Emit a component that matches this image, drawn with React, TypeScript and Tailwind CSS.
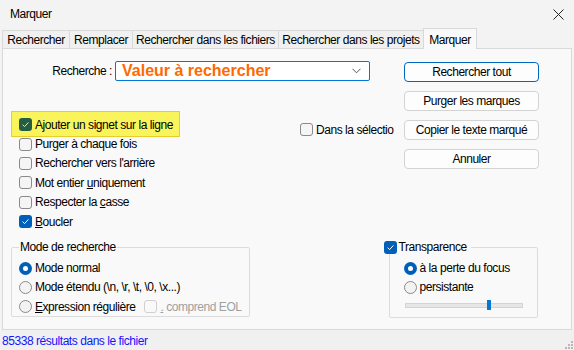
import React from "react";

const font = { fontFamily: '"Liberation Sans", Arial, sans-serif' };

function Check({ checked, tone = "blue", disabled }: { checked?: boolean; tone?: "blue" | "green"; disabled?: boolean }) {
  if (checked) {
    const bg = tone === "green" ? "bg-[#245d44]" : "bg-[#005fb8]";
    const stroke = tone === "green" ? "#d9ecb8" : "#ffffff";
    return (
      <span className={`flex w-[13px] h-[13px] shrink-0 items-center justify-center rounded-[3px] ${bg}`}>
        <svg width="9" height="9" viewBox="0 0 9 9">
          <path d="M1.6 4.7 L3.6 6.6 L7.4 2.4" fill="none" stroke={stroke} strokeWidth="1" />
        </svg>
      </span>
    );
  }
  return (
    <span
      className={
        disabled
          ? "block w-[13px] h-[13px] shrink-0 rounded-[3px] border border-[#d0d0d0] bg-[#f9f9f9]"
          : "block w-[13px] h-[13px] shrink-0 rounded-[3px] border border-[#8a8a8a] bg-[#f5f5f5]"
      }
    />
  );
}

function Radio({ checked }: { checked?: boolean }) {
  if (checked) {
    return (
      <span className="flex w-[13px] h-[13px] shrink-0 items-center justify-center rounded-full bg-[#005fb8]">
        <span className="block w-[5px] h-[5px] rounded-full bg-white" />
      </span>
    );
  }
  return <span className="block w-[13px] h-[13px] shrink-0 rounded-full border border-[#8a8a8a] bg-[#f3f3f3]" />;
}

function Row({ children, box }: { children: React.ReactNode; box: React.ReactNode }) {
  return (
    <div className="flex h-[19.4px] items-center gap-[3px] whitespace-nowrap">
      {box}
      <span>{children}</span>
    </div>
  );
}

function Btn({ label, focused }: { label: string; focused?: boolean }) {
  return (
    <div
      className={[
        "flex h-[20px] w-[135px] items-center justify-center rounded-[4px] bg-[#fdfdfd] whitespace-nowrap",
        focused ? "border border-[#0067c0]" : "border border-[#d3d3d3]",
      ].join(" ")}
    >
      {label}
    </div>
  );
}

const tabs = [
  { label: "Rechercher", w: "w-[67px]" },
  { label: "Remplacer", w: "w-[63px]" },
  { label: "Rechercher dans les fichiers", w: "w-[146px]" },
  { label: "Rechercher dans les projets", w: "w-[145px]" },
];

export default function App() {
  return (
    <div
      className="w-[574px] h-[350px] flex flex-col bg-[#f3f3f3] text-[12px] tracking-[-0.45px] text-black overflow-hidden"
      style={font}
    >
      {/* ── Title bar ── */}
      <div className="h-[28px] shrink-0 flex items-center justify-between pl-[10px] pr-[10px]">
        <span className="text-[12px]">Marquer</span>
        <svg width="11" height="11" viewBox="0 0 11 11">
          <path d="M0.5 0.5 L10.5 10.5 M10.5 0.5 L0.5 10.5" stroke="#222" strokeWidth="1" />
        </svg>
      </div>

      {/* ── Tabs ── */}
      <div className="h-[20px] shrink-0 flex items-end pl-[2px] relative z-10">
        {tabs.map((t) => (
          <div
            key={t.label}
            className={`${t.w} h-[18px] flex items-center justify-center border-t border-l border-[#d9d9d9] bg-[#f0f0f0] whitespace-nowrap`}
          >
            {t.label}
          </div>
        ))}
        <div className="w-[54px] h-[21px] -mb-px flex items-start justify-center pt-[2px] border-t border-l border-r border-[#d9d9d9] bg-[#f9f9f9]">
          Marquer
        </div>
      </div>

      {/* ── Panel ── */}
      <div className="h-[282px] shrink-0 mx-[2px] border border-[#d9d9d9] bg-[#f9f9f9] flex flex-col">
        <div className="flex">
          {/* left part */}
          <div className="w-[401px] shrink-0 flex flex-col">
            <div className="mt-[12px] flex items-center h-[20px]">
              <span className="w-[112px] text-right pr-[3px]">Recherche :</span>
              <div className="w-[255px] h-[20px] flex items-center justify-between rounded-[2px] border border-[#0078d4] bg-white pl-[6px] pr-[8px]">
                <span className="text-[16px] font-bold tracking-normal text-[#ff6a00] leading-none">Valeur à rechercher</span>
                <svg width="9" height="6" viewBox="0 0 9 6">
                  <path d="M0.5 0.8 L4.5 4.8 L8.5 0.8" fill="none" stroke="#555" strokeWidth="1" />
                </svg>
              </div>
            </div>

            <div className="mt-[34px] flex">
              <div className="ml-[16px] w-[281px] flex flex-col">
                <div className="relative">
                  <div className="absolute -left-[8px] -top-[4px] w-[169px] h-[26px] bg-[#faf45c] border border-[#e6cf2a]" />
                  <div className="relative">
                    <Row box={<Check checked tone="green" />}>Ajouter un signet sur la ligne</Row>
                  </div>
                </div>
                <Row box={<Check />}>Purger à chaque fois</Row>
                <Row box={<Check />}>Rechercher vers l'arrière</Row>
                <Row box={<Check />}>
                  Mot entier <u>u</u>niquement
                </Row>
                <Row box={<Check />}>
                  Respecter la <u>c</u>asse
                </Row>
                <Row box={<Check checked />}>
                  <u>B</u>oucler
                </Row>
              </div>
              <div className="mt-[5px]">
                <Row box={<Check />}>Dans la sélectio</Row>
              </div>
            </div>
          </div>

          {/* buttons */}
          <div className="mt-[13px] flex flex-col gap-[9px]">
            <Btn label="Rechercher tout" focused />
            <Btn label="Purger les marques" />
            <Btn label="Copier le texte marqué" />
            <Btn label="Annuler" />
          </div>
        </div>

        {/* ── Group boxes ── */}
        <div className="mt-[9px] flex items-start">
          <fieldset className="ml-[8px] w-[238px] h-[77px] border border-[#dcdcdc] rounded-[2px] px-[7px]">
            <legend className="px-[1px] leading-[14px]">Mode de recherche</legend>
            <div className="mt-[4px] flex flex-col">
              <Row box={<Radio checked />}>Mode normal</Row>
              <Row box={<Radio />}>Mode étendu (\n, \r, \t, \0, \x...)</Row>
              <div className="flex items-center whitespace-nowrap">
                <Row box={<Radio />}>
                  <u>E</u>xpression régulière
                </Row>
                <div className="ml-[9px] flex items-center gap-[3px] text-[#a0a0a0]">
                  <Check disabled />
                  <span>
                    <u>.</u> comprend EOL
                  </span>
                </div>
              </div>
            </div>
          </fieldset>

          <fieldset className="ml-[139px] w-[149px] h-[78px] border border-[#dcdcdc] rounded-[2px] px-[14px]">
            <legend className="-ml-[20px] pr-[4px] bg-[#f9f9f9] leading-[14px]">
              <span className="flex items-center gap-[2px]">
                <Check checked />
                <span>Transparence</span>
              </span>
            </legend>
            <div className="mt-[4px] flex flex-col">
              <Row box={<Radio checked />}>à la perte du focus</Row>
              <Row box={<Radio />}>persistante</Row>
              <div className="mt-[3px] ml-[1px] flex items-center w-[118px] h-[10px]">
                <div className="w-[82px] h-[5px] bg-[#e6e6e6] border-t border-b border-l border-[#d4d4d4]" />
                <div className="w-[4px] h-[10px] bg-[#0078d4]" />
                <div className="w-[32px] h-[5px] bg-[#e6e6e6] border-t border-b border-r border-[#d4d4d4]" />
              </div>
            </div>
          </fieldset>
        </div>
      </div>

      {/* ── Status bar ── */}
      <div className="flex-1 flex items-center justify-between bg-[#f0f0f0] pl-[2px] pr-[1px]">
        <span className="text-[#1414ff] pt-[2px]">85338 résultats dans le fichier</span>
        <svg width="8" height="8" viewBox="0 0 8 8" className="self-end mb-[1px]">
          <rect x="6" y="0" width="2" height="2" fill="#b8b8b8" />
          <rect x="3" y="3" width="2" height="2" fill="#b8b8b8" />
          <rect x="6" y="3" width="2" height="2" fill="#b8b8b8" />
          <rect x="0" y="6" width="2" height="2" fill="#b8b8b8" />
          <rect x="3" y="6" width="2" height="2" fill="#b8b8b8" />
          <rect x="6" y="6" width="2" height="2" fill="#b8b8b8" />
        </svg>
      </div>
    </div>
  );
}
